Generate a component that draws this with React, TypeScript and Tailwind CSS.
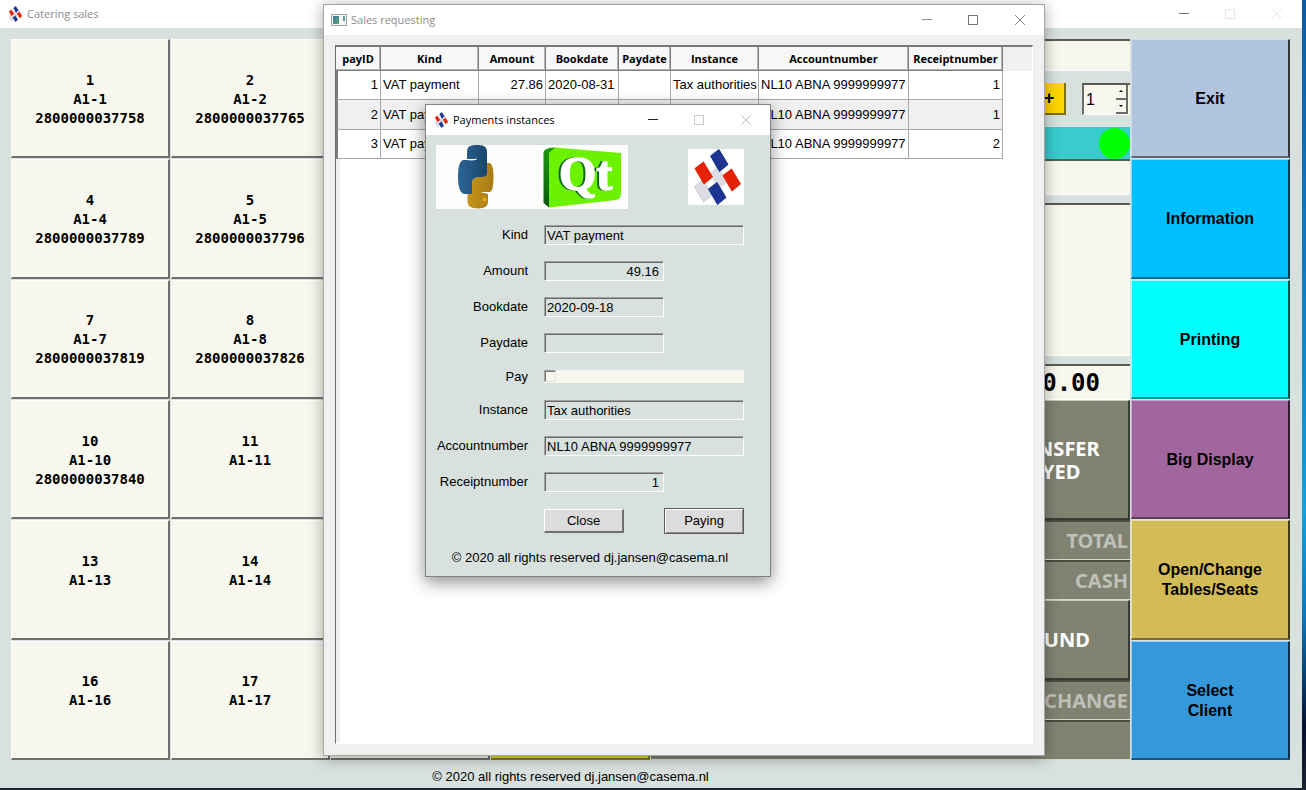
import type { ReactNode } from "react";

const ARIAL = "font-['Liberation_Sans',Arial,sans-serif]";
const SEGOE = "font-['Open_Sans','Noto_Sans',sans-serif]";

const seats = [
  { no: "1", seat: "A1-1", code: "2800000037758" },
  { no: "2", seat: "A1-2", code: "2800000037765" },
  { no: "4", seat: "A1-4", code: "2800000037789" },
  { no: "5", seat: "A1-5", code: "2800000037796" },
  { no: "7", seat: "A1-7", code: "2800000037819" },
  { no: "8", seat: "A1-8", code: "2800000037826" },
  { no: "10", seat: "A1-10", code: "2800000037840" },
  { no: "11", seat: "A1-11", code: "" },
  { no: "13", seat: "A1-13", code: "" },
  { no: "14", seat: "A1-14", code: "" },
  { no: "16", seat: "A1-16", code: "" },
  { no: "17", seat: "A1-17", code: "" },
];

const actions = [
  { lines: ["Exit"], style: "bg-[#b0c4de] border-t-[#d0dcec] border-l-[#d0dcec] border-r-[#33383f] border-b-[#5c6674]" },
  { lines: ["Information"], style: "bg-[#00bfff] border-t-[#8adfff] border-l-[#8adfff] border-r-[#003c50] border-b-[#006c90]" },
  { lines: ["Printing"], style: "bg-[#00ffff] border-t-[#a0ffff] border-l-[#a0ffff] border-r-[#005050] border-b-[#009090]" },
  { lines: ["Big Display"], style: "bg-[#a2669f] border-t-[#cda6cb] border-l-[#cda6cb] border-r-[#2c1c2b] border-b-[#5c3a5a]" },
  { lines: ["Open/Change", "Tables/Seats"], style: "bg-[#d3bb57] border-t-[#e8dca8] border-l-[#e8dca8] border-r-[#40391a] border-b-[#7a6c32]" },
  { lines: ["Select", "Client"], style: "bg-[#3498db] border-t-[#9bcdf0] border-l-[#9bcdf0] border-r-[#102f44] border-b-[#1e577e]" },
];

const payments = [
  { id: 1, kind: "VAT payment", amount: "27.86", book: "2020-08-31", pay: "", inst: "Tax authorities", acc: "NL10 ABNA 9999999977", rec: 1 },
  { id: 2, kind: "VAT payment", amount: "49.16", book: "2020-09-18", pay: "", inst: "Tax authorities", acc: "NL10 ABNA 9999999977", rec: 1 },
  { id: 3, kind: "VAT payment", amount: "49.16", book: "2020-09-18", pay: "", inst: "Tax authorities", acc: "NL10 ABNA 9999999977", rec: 2 },
];

const columns = [
  { name: "payID", width: "w-[45px]" },
  { name: "Kind", width: "w-[98px]" },
  { name: "Amount", width: "w-[67px]" },
  { name: "Bookdate", width: "w-[73px]" },
  { name: "Paydate", width: "w-[52px]" },
  { name: "Instance", width: "w-[88px]" },
  { name: "Accountnumber", width: "w-[150px]" },
  { name: "Receiptnumber", width: "w-[94px]" },
];

function TilesLogo({ className }: { className: string }) {
  const tile = "0,-11 9,4 0.5,11 -8.5,-4.5";
  return (
    <svg viewBox="0 0 56 56" className={className} strokeWidth="1" strokeLinejoin="round" aria-hidden="true">
      <polygon points={tile} transform="translate(30 29)" fill="#dcdde2" stroke="#dcdde2" />
      <polygon points={tile} transform="translate(15 42)" fill="#dcdde2" stroke="#c9cace" />
      <polygon points={tile} transform="translate(31 11.500)" fill="#1d3590" stroke="#1d3590" />
      <polygon points={tile} transform="translate(29 44.500)" fill="#1d3590" stroke="#1d3590" />
      <polygon points={tile} transform="translate(15.500 24)" fill="#e52207" stroke="#e52207" />
      <polygon points={tile} transform="translate(43.500 31)" fill="#e52207" stroke="#e52207" />
    </svg>
  );
}

function PythonQtLogo() {
  return (
    <svg viewBox="0 0 192 64" className="h-16 w-48 bg-[#fdfdfb]" aria-hidden="true">
      <defs>
        <linearGradient id="pyBlue" x1="0" x2="1" y1="0" y2="0">
          <stop offset="0" stopColor="#2c6694" />
          <stop offset="1" stopColor="#1a456d" />
        </linearGradient>
        <linearGradient id="pyGold" x1="0" x2="1" y1="0" y2="0">
          <stop offset="0" stopColor="#c4941c" />
          <stop offset="1" stopColor="#a97c14" />
        </linearGradient>
        <linearGradient id="qtSide" x1="0" x2="0" y1="0" y2="1">
          <stop offset="0" stopColor="#1f9a10" />
          <stop offset="1" stopColor="#0a5a0c" />
        </linearGradient>
      </defs>
      <path d="M50 18H54Q57.500 20 57.500 32Q57.500 46 54 47H44L52 49V57Q52 63.500 42 63.500Q31.500 63.500 31.500 57V46H36V38Q36 33 42 32H46Q50 32 50 28Z" fill="url(#pyGold)" />
      <path d="M31 14V6Q31 0 39 0H43Q51 0 51 7V28Q51 32 46 32H42Q36 33 36 38V49H28Q22 47 22 32Q22 15 28 15H40V14Z" fill="url(#pyBlue)" />
      <path d="M31 14.500Q36 15.500 40.500 14" stroke="#f4f6f8" strokeWidth="1.200" fill="none" />
      <circle cx="48.500" cy="54.500" r="2" fill="#f0a51e" />
      <path d="M119 2.500L185 8V49Q185 54 180 55L113 62.500V8Q113 2.500 119 2.500Z" fill="#6bf200" />
      <path d="M107.500 7Q109 2.500 119 2.500L113 8V62.500L107.500 58Z" fill="url(#qtSide)" />
      <text
        x="123"
        y="45"
        fontFamily="'Liberation Serif', serif"
        fontWeight="700"
        fontSize="48"
        fill="#ffffff"
        stroke="#ffffff"
        strokeWidth="1.500"
        className="[filter:drop-shadow(-2px_0_0_#0d6414)]"
      >
        Qt
      </text>
    </svg>
  );
}

function WindowControls({ min, max, close }: { min: string; max: string; close: string }) {
  return (
    <div className="flex self-stretch">
      <button type="button" aria-label="Minimize" className={`flex w-[46px] items-center justify-center ${min}`}>
        <svg viewBox="0 0 12 12" className="size-3" shapeRendering="crispEdges" aria-hidden="true">
          <path d="M1 5.500H11" stroke="currentColor" fill="none" />
        </svg>
      </button>
      <button type="button" aria-label="Maximize" className={`flex w-[46px] items-center justify-center ${max}`}>
        <svg viewBox="0 0 12 12" className="size-3" shapeRendering="crispEdges" aria-hidden="true">
          <rect x="1.500" y="1.500" width="9" height="9" stroke="currentColor" fill="none" />
        </svg>
      </button>
      <button type="button" aria-label="Close window" className={`flex w-12 items-center justify-center ${close}`}>
        <svg viewBox="0 0 12 12" className="size-3" aria-hidden="true">
          <path d="M1 1L11 11M11 1L1 11" stroke="currentColor" fill="none" />
        </svg>
      </button>
    </div>
  );
}

function Panel({ children, className = "" }: { children?: ReactNode; className?: string }) {
  return (
    <div className={`flex items-center justify-end border-t-2 border-b border-t-[#4a4c44] border-b-[#d8dcd0] bg-[#808372] pr-0.5 text-[20px] font-bold text-[#bfc0b8] ${className}`}>
      {children}
    </div>
  );
}

function Till() {
  const key = "flex items-center justify-center border-t border-r-2 border-b-2 border-t-[#c8cabf] border-r-[#383a33] border-b-[#383a33] bg-[#808372] text-center text-[20px] leading-[23px] font-bold text-white";
  const field = "border-t-2 border-b border-t-[#5a5b57] border-b-white bg-[#f8f7ee]";
  return (
    <section aria-label="Till" className="col-span-3 col-start-5 row-span-6 row-start-1 flex flex-col font-['Noto_Sans','Open_Sans',sans-serif]">
      <div className={`h-8 ${field}`} />
      <div className="mt-3 flex h-8 items-stretch justify-end gap-4">
        <button type="button" className={`w-20 border-r-2 border-b-2 border-r-[#80700a] border-b-[#80700a] bg-[#ffd500] pl-12 text-lg font-bold ${ARIAL}`}>
          +
        </button>
        <div className="flex w-12 border-t-2 border-l-2 border-b border-t-[#5a5b57] border-l-[#6b6c68] border-b-white bg-[#f8f7ee]">
          <input aria-label="Quantity" defaultValue="1" className={`w-8 min-w-0 bg-transparent pl-0.5 text-base outline-none ${ARIAL}`} />
          <div className="flex w-3 shrink-0 flex-col">
            <button type="button" aria-label="Increase" className="flex flex-1 items-center justify-center border-r-2 border-b-2 border-[#6b6c68]">
              <svg viewBox="0 0 4 2" className="h-0.5 w-1" aria-hidden="true"><path d="M0 2L2 0L4 2Z" /></svg>
            </button>
            <button type="button" aria-label="Decrease" className="flex flex-1 items-center justify-center border-r-2 border-b-2 border-[#6b6c68]">
              <svg viewBox="0 0 4 2" className="h-0.5 w-1" aria-hidden="true"><path d="M0 0L2 2L4 0Z" /></svg>
            </button>
          </div>
        </div>
      </div>
      <div className="mt-3 flex h-8 items-center justify-end bg-[#38cccc]">
        <span className="size-[31px] rounded-full bg-[#00ff00]" />
      </div>
      <div className={`h-9 ${field}`} />
      <div className={`mt-2 flex-1 ${field}`} />
      <div className={`mt-2 flex h-9 items-center justify-end pr-[30px] font-['DejaVu_Sans_Mono',monospace] text-2xl font-bold ${field}`}>0.00</div>
      <div className="grid h-[120px] grid-cols-3">
        <div className="col-span-2 bg-[#808372]" />
        <button type="button" className={key}>
          TRANSFER
          <br />
          PAYED
        </button>
      </div>
      <Panel className="h-10">TOTAL</Panel>
      <Panel className="h-10">CASH</Panel>
      <div className="grid h-20 grid-cols-3">
        <div className="col-span-2 bg-[#808372]" />
        <button type="button" className={key}>REFUND</button>
      </div>
      <Panel className="h-10">CHANGE</Panel>
      <Panel className="h-10" />
    </section>
  );
}

function CateringWindow() {
  return (
    <main className="mr-1 mb-0.5 flex flex-1 flex-col bg-[#d8e1de]">
      <header className={`flex h-7 items-center bg-white pr-px pl-[7px] text-[11px] text-[#8c8c8c] ${SEGOE}`}>
        <TilesLogo className="mr-1 size-4" />
        <h1 className="flex-1">Catering sales</h1>
        <WindowControls min="text-[#777777]" max="text-[#e4e4e4]" close="text-[#e4e4e4]" />
      </header>
      <div className="grid flex-1 grid-cols-8 grid-rows-6 gap-px pt-[11px] pr-3 pl-[11px]">
        <div className="col-span-2 row-span-6 grid grid-cols-2 grid-rows-6 gap-px">
          {seats.map((s) => (
            <button
              key={s.no}
              type="button"
              className="flex flex-col items-center justify-center border-t border-l border-r-2 border-b-2 border-t-white border-l-white border-r-[#70716c] border-b-[#70716c] bg-[#f8f7ee] pt-0.5 font-['DejaVu_Sans_Mono',monospace] text-[14px] leading-[19px] font-bold text-black"
            >
              <span>{s.no}</span>
              <span>{s.seat}</span>
              {s.code ? <span>{s.code}</span> : <span className="h-[19px]" />}
            </button>
          ))}
        </div>
        <div className="col-start-3 row-span-6 row-start-1 border-r-2 border-b-2 border-[#70716c] bg-[#f8f7ee]" />
        <div className="col-start-4 row-span-6 row-start-1 border-r-2 border-b-2 border-[#84801a] bg-[#e6e024]" />
        <Till />
        <nav aria-label="Functions" className={`col-start-8 row-span-6 row-start-1 grid grid-rows-6 gap-px ${ARIAL}`}>
          {actions.map((a) => (
            <button key={a.lines[0]} type="button" className={`flex flex-col items-center justify-center border-t border-l border-r-2 border-b-2 pt-0.5 text-base leading-5 font-bold text-black ${a.style}`}>
              {a.lines.map((l) => (
                <span key={l}>{l}</span>
              ))}
            </button>
          ))}
        </nav>
      </div>
      <footer className={`grid h-7 grid-cols-8 pt-1.5 pr-3 pl-[11px] text-center text-[13px] text-black ${ARIAL}`}>
        <p className="col-span-7 self-center">© 2020 all rights reserved dj.jansen@casema.nl</p>
      </footer>
    </main>
  );
}

function SalesWindow() {
  const cell = "border-r border-b border-[#a9a9a9] whitespace-nowrap overflow-hidden";
  return (
    <section aria-label="Sales requesting" className="absolute top-[4px] left-[323px] flex h-[752px] w-[722px] flex-col border border-[#a5a5a5] bg-[#f0f0f0] shadow-[0_2px_14px_rgba(0,0,0,0.35)]">
      <header className={`flex h-[30px] shrink-0 items-center bg-white pl-[7px] text-[11px] text-[#8c8c8c] ${SEGOE}`}>
        <svg viewBox="0 0 16 12" className="mr-1 h-3 w-4" aria-hidden="true">
          <defs>
            <linearGradient id="appPane" x1="0" x2="1" y1="0" y2="1">
              <stop offset="0" stopColor="#3f7fa8" />
              <stop offset="1" stopColor="#56a070" />
            </linearGradient>
          </defs>
          <rect x="0.500" y="0.500" width="15" height="11" fill="#f4f7f8" stroke="#9aa0a4" />
          <rect x="2" y="2" width="6" height="8" fill="url(#appPane)" />
          <rect x="12" y="2" width="2" height="5" fill="#5c9c98" />
        </svg>
        <h2 className="flex-1">Sales requesting</h2>
        <WindowControls min="text-[#8c8c8c]" max="text-[#777777]" close="text-[#8c8c8c]" />
      </header>
      <div className="m-[11px] mt-[10px] flex-1 border-t-2 border-r border-b border-l border-t-[#7a7a7a] border-r-white border-b-white border-l-[#6c6c6c] bg-white">
        <div className="h-full border-l-4 border-[#f0f0f0]">
          <div className="-ml-1 bg-[linear-gradient(#f0f0f0_24px,transparent_24px)]">
            <table className={`table-fixed border-separate border-spacing-0 text-[13px] text-black ${ARIAL}`}>
              <thead>
                <tr className="h-6">
                  {columns.map((c) => (
                    <th key={c.name} scope="col" className={`border-r border-b border-[#7c7c7c] bg-[#f7f7f7] p-0 pt-0.5 text-center text-[11px] font-bold shadow-[inset_-1px_-1px_0_#b4b4b4] ${c.width} ${SEGOE}`}>
                      <span className="flex justify-center">{c.name}</span>
                    </th>
                  ))}
                </tr>
              </thead>
              <tbody>
                {payments.map((p) => (
                  <tr key={p.id} className={p.id === 2 ? "h-[30px] bg-[#f0f0f0]" : "h-[29px] bg-white"}>
                    <th scope="row" className={`${cell} border-l-2 border-l-[#7c7c7c] pr-0.5 text-right font-normal`}>{p.id}</th>
                    <td className={`${cell} pl-0.5`}>{p.kind}</td>
                    <td className={`${cell} pr-0.5 text-right`}>{p.amount}</td>
                    <td className={`${cell} pl-0.5`}>{p.book}</td>
                    <td className={`${cell} pl-0.5`}>{p.pay}</td>
                    <td className={`${cell} pl-0.5`}>{p.inst}</td>
                    <td className={`${cell} pl-0.5`}>{p.acc}</td>
                    <td className={`${cell} pr-0.5 text-right`}>{p.rec}</td>
                  </tr>
                ))}
              </tbody>
            </table>
          </div>
        </div>
      </div>
    </section>
  );
}

function Field({ id, label, value, short, right }: { id: string; label: string; value: string; short?: boolean; right?: boolean }) {
  return (
    <>
      <label htmlFor={id} className="text-right">{label}</label>
      <input
        id={id}
        readOnly
        defaultValue={value}
        className={`h-5 border border-t-[#a0a0a0] border-r-white border-b-white border-l-[#a0a0a0] bg-transparent shadow-[inset_1px_1px_0_#696969] outline-none ${short ? "w-[120px]" : "w-full"} ${right ? "pr-1 text-right" : "pl-0.5"}`}
      />
    </>
  );
}

function PaymentDialog() {
  return (
    <section role="dialog" aria-label="Payments instances" className="absolute top-[104px] left-[425px] w-[346px] border border-[#7e8280] bg-[#d8e1de] shadow-[0_5px_16px_rgba(0,0,0,0.45)]">
      <header className={`flex h-[30px] items-center bg-white pl-[7px] text-[11px] text-black ${SEGOE}`}>
        <TilesLogo className="mr-1 size-4" />
        <h2 className="flex-1">Payments instances</h2>
        <WindowControls min="text-[#222222]" max="text-[#cccccc]" close="text-[#c4c4c4]" />
      </header>
      <form className={`pt-[10px] pr-[26px] pb-[10px] pl-[10px] text-[13px] leading-4 text-black ${ARIAL}`} onSubmit={(e) => e.preventDefault()}>
        <div className="flex items-center justify-between">
          <PythonQtLogo />
          <TilesLogo className="size-14 bg-white" />
        </div>
        <div className="mt-4 grid grid-cols-[92px_1fr] items-center gap-4">
          <Field id="kind" label="Kind" value="VAT payment" />
          <Field id="amount" label="Amount" value="49.16" short right />
          <Field id="bookdate" label="Bookdate" value="2020-09-18" short />
          <Field id="paydate" label="Paydate" value="" short />
          <label htmlFor="pay" className="h-[15px] text-right">Pay</label>
          <div className="flex h-[13px] bg-[#f8f7ee]">
            <input id="pay" type="checkbox" className="size-3 appearance-none border border-t-[#a0a0a0] border-r-[#e2e2dc] border-b-[#e2e2dc] border-l-[#a0a0a0] shadow-[inset_1px_1px_0_#7a7a78]" />
          </div>
          <Field id="instance" label="Instance" value="Tax authorities" />
          <Field id="account" label="Accountnumber" value="NL10 ABNA 9999999977" />
          <Field id="receipt" label="Receiptnumber" value="1" short right />
        </div>
        <div className="mt-4 ml-[108px] flex items-center justify-between">
          <button type="button" className="h-6 w-20 border-t border-l border-r-2 border-b-2 border-t-white border-l-white border-r-[#707070] border-b-[#707070] bg-[#dcdcdc]">Close</button>
          <button type="submit" className="h-[26px] w-20 border border-[#5c5c5c] bg-[#dcdcdc] shadow-[inset_1px_1px_0_#ffffff,inset_-1px_-1px_0_#8a8a8a]">Paying</button>
        </div>
        <p className="mt-4 text-center">© 2020 all rights reserved dj.jansen@casema.nl</p>
      </form>
    </section>
  );
}

export default function App() {
  return (
    <div className="relative flex min-h-screen overflow-hidden bg-[linear-gradient(to_bottom,#0a5ca4_0%,#0f7cc8_35%,#12a0de_65%,#0a78c0_78%,#061030_92%,#1c2330_100%)]">
      <div className="flex flex-1 bg-[linear-gradient(to_right,#1c2330,#1c2330)] bg-[length:calc(100%-4px)_100%] bg-no-repeat">
        <CateringWindow />
      </div>
      <SalesWindow />
      <PaymentDialog />
    </div>
  );
}
